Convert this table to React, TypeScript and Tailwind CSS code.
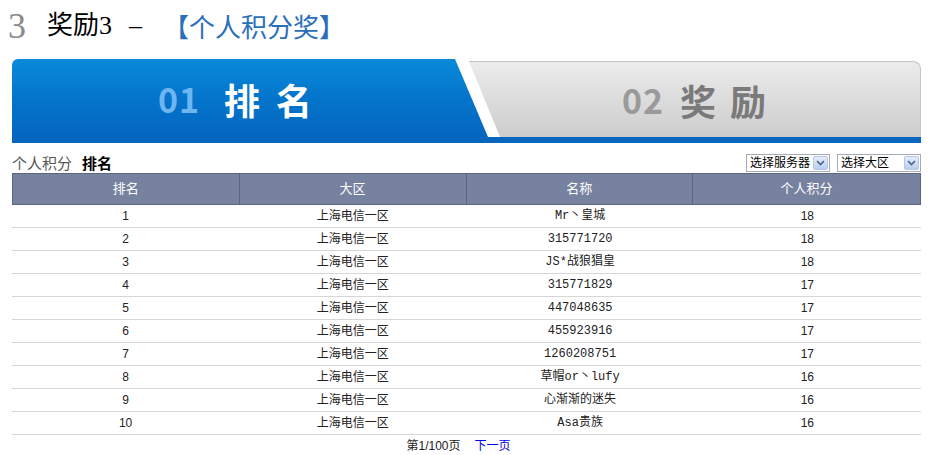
const rows = [
  { rank: 1, zone: "上海电信一区", name: "Mr丶皇城", score: 18 },
  { rank: 2, zone: "上海电信一区", name: "315771720", score: 18 },
  { rank: 3, zone: "上海电信一区", name: "JS*战狼猖皇", score: 18 },
  { rank: 4, zone: "上海电信一区", name: "315771829", score: 17 },
  { rank: 5, zone: "上海电信一区", name: "447048635", score: 17 },
  { rank: 6, zone: "上海电信一区", name: "455923916", score: 17 },
  { rank: 7, zone: "上海电信一区", name: "1260208751", score: 17 },
  { rank: 8, zone: "上海电信一区", name: "草帽or丶lufy", score: 16 },
  { rank: 9, zone: "上海电信一区", name: "心渐渐的迷失", score: 16 },
  { rank: 10, zone: "上海电信一区", name: "Asa贵族", score: 16 },
];

function FakeSelect({ label }: { label: string }) {
  return (
    <div className="w-[84px] h-[18px] flex items-center border border-[#a5acb5] bg-white pl-[3px] pr-px whitespace-nowrap">
      <span className="flex-1 text-[12px] leading-none text-black">{label}</span>
      <span className="w-[15px] h-[14px] flex items-center justify-center bg-gradient-to-b from-[#e4edfb] to-[#b9cff0] border border-[#b4c6e6] rounded-[2px]">
        <svg width="9" height="6" viewBox="0 0 9 6">
          <path d="M1 1l3.5 3.5L8 1" fill="none" stroke="#4d6185" strokeWidth="1.6" />
        </svg>
      </span>
    </div>
  );
}

export default function App() {
  return (
    <div className="w-[937px] h-[455px] bg-white overflow-hidden font-['Liberation_Sans','Noto_Sans_CJK_SC',sans-serif] text-[#333]">
      {/* title */}
      <div className="flex items-center h-[50px] pl-[8px] pt-[2px]">
        <span className="font-['Liberation_Serif',serif] text-[36px] leading-none text-[#8a8a8a]">3</span>
        <span className="ml-[21px] font-['Liberation_Serif','Noto_Sans_CJK_SC',serif] text-[26px] leading-none text-black">奖励3</span>
        <span className="ml-[17px] font-['Liberation_Serif',serif] text-[26px] leading-none text-black">–</span>
        <span className="ml-[21px] text-[26px] leading-none text-[#2a6fba] font-['Noto_Sans_CJK_SC',sans-serif]">【个人积分奖】</span>
      </div>

      {/* tabs banner */}
      <div className="ml-[12px] w-[909px] mt-[9px] flex border-b-[6px] border-[#0866bf]">
        <div
          className="relative z-10 w-[476px] h-[78px] shrink-0 rounded-tl-[6px] bg-gradient-to-b from-[#0b8ad9] via-[#0475cb] to-[#0466bf] flex items-center justify-center pr-[14px] pt-[2px]"
          style={{ clipPath: "polygon(0 0, 443px 0, 476px 100%, 0 100%)" }}
        >
          <span className="font-['Noto_Sans_CJK_SC',sans-serif] font-bold text-[34px] leading-none text-[#6db6ef] tracking-[1px]">01</span>
          <span className="ml-[24px] font-['Noto_Sans_CJK_SC',sans-serif] font-bold text-[36px] leading-none text-white tracking-[16px]">排名</span>
        </div>
        <div
          className="-ml-[32px] flex-1 h-[78px] pt-[2px]"
          style={{ clipPath: "polygon(12px 0, 100% 0, 100% 100%, 44px 100%)" }}
        >
          <div className="h-full rounded-tr-[8px] border-t border-r border-[#c4c4c4] bg-gradient-to-b from-[#ececec] via-[#dcdcdc] to-[#cdcdcd] flex items-center justify-center pl-[26px]">
            <span className="font-['Noto_Sans_CJK_SC',sans-serif] font-bold text-[34px] leading-none text-[#9a9a9a] tracking-[1px]">02</span>
            <span className="ml-[16px] font-['Noto_Sans_CJK_SC',sans-serif] font-bold text-[36px] leading-none text-[#7a7a7a] tracking-[14px]">奖励</span>
          </div>
        </div>
      </div>

      {/* section header */}
      <div className="ml-[12px] w-[909px] mt-[10px] h-[20px] flex items-center justify-between">
        <div className="text-[15px] leading-none">
          <span className="text-[#555]">个人积分</span>
          <span className="ml-[10px] font-bold text-black">排名</span>
        </div>
        <div className="flex gap-[7px]">
          <FakeSelect label="选择服务器" />
          <FakeSelect label="选择大区" />
        </div>
      </div>

      {/* table */}
      <div className="ml-[12px] w-[909px]">
        <div className="grid grid-cols-4 h-[32px] bg-[#7782a0] border border-[#5c6680]">
          {["排名", "大区", "名称", "个人积分"].map((h, i) => (
            <div
              key={h}
              className={`flex items-center justify-center text-[13px] text-white ${i < 3 ? "border-r border-[#5c6680]" : ""}`}
            >
              {h}
            </div>
          ))}
        </div>
        {rows.map((r) => (
          <div key={r.rank} className="grid grid-cols-4 h-[23px] border-b border-[#d6d6d6] text-[12px] text-[#222]">
            <div className="flex items-center justify-center">{r.rank}</div>
            <div className="flex items-center justify-center">{r.zone}</div>
            <div className="flex items-center justify-center font-['Liberation_Mono','Noto_Sans_CJK_SC',monospace]">{r.name}</div>
            <div className="flex items-center justify-center">{r.score}</div>
          </div>
        ))}
        <div className="flex justify-center items-center h-[22px] text-[12px] text-[#222] pr-[16px]">
          <span>第1/100页</span>
          <span className="ml-[14px] text-[#0000ee]">下一页</span>
        </div>
      </div>
    </div>
  );
}
